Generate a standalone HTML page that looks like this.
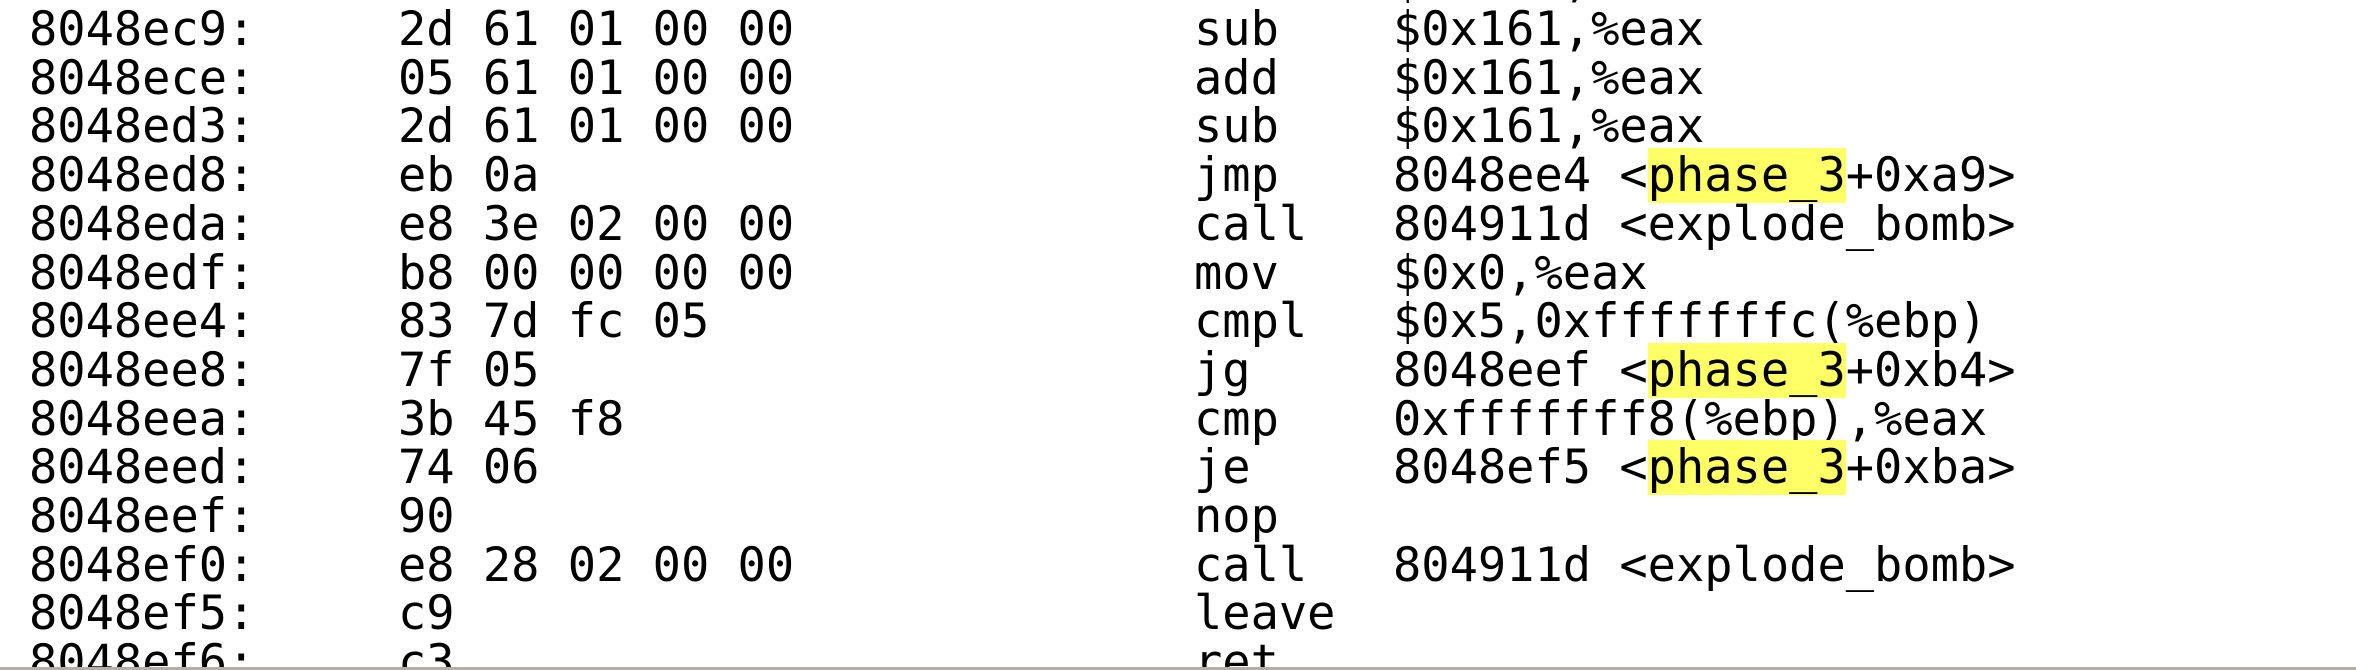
<!DOCTYPE html>
<html><head><meta charset="utf-8"><style>
html,body{margin:0;padding:0;background:#fff;width:2356px;height:670px;overflow:hidden}
.w{position:relative;width:2356px;height:670px}
.r{position:absolute;left:0;height:48.7px;line-height:48.7px;font-family:"DejaVu Sans Mono","Liberation Mono",monospace;font-size:47px;color:#000;white-space:pre}
.r span{position:absolute;top:0}
.a{left:29px}.h{left:398px}.m{left:1194px}.o{left:1393px}
.hl{background:#ffff66}
.b{position:absolute;left:0;top:667px;width:2356px;height:3px;background:#b3aea6}
</style></head><body><div class="w">
<div class="r" style="top:-43px"><span class="o">$0x161,%eax</span></div>
<div class="r" style="top:6px"><span class="a">8048ec9:</span><span class="h">2d 61 01 00 00</span><span class="m">sub</span><span class="o">$0x161,%eax</span></div>
<div class="r" style="top:54.7px"><span class="a">8048ece:</span><span class="h">05 61 01 00 00</span><span class="m">add</span><span class="o">$0x161,%eax</span></div>
<div class="r" style="top:103.4px"><span class="a">8048ed3:</span><span class="h">2d 61 01 00 00</span><span class="m">sub</span><span class="o">$0x161,%eax</span></div>
<div class="r" style="top:152.1px"><span class="a">8048ed8:</span><span class="h">eb 0a</span><span class="m">jmp</span><span class="o">8048ee4 &lt;<i class="hl" style="font-style:normal">phase_3</i>+0xa9&gt;</span></div>
<div class="r" style="top:200.8px"><span class="a">8048eda:</span><span class="h">e8 3e 02 00 00</span><span class="m">call</span><span class="o">804911d &lt;explode_bomb&gt;</span></div>
<div class="r" style="top:249.5px"><span class="a">8048edf:</span><span class="h">b8 00 00 00 00</span><span class="m">mov</span><span class="o">$0x0,%eax</span></div>
<div class="r" style="top:298.2px"><span class="a">8048ee4:</span><span class="h">83 7d fc 05</span><span class="m">cmpl</span><span class="o">$0x5,0xfffffffc(%ebp)</span></div>
<div class="r" style="top:346.9px"><span class="a">8048ee8:</span><span class="h">7f 05</span><span class="m">jg</span><span class="o">8048eef &lt;<i class="hl" style="font-style:normal">phase_3</i>+0xb4&gt;</span></div>
<div class="r" style="top:395.6px"><span class="a">8048eea:</span><span class="h">3b 45 f8</span><span class="m">cmp</span><span class="o">0xfffffff8(%ebp),%eax</span></div>
<div class="r" style="top:444.3px"><span class="a">8048eed:</span><span class="h">74 06</span><span class="m">je</span><span class="o">8048ef5 &lt;<i class="hl" style="font-style:normal">phase_3</i>+0xba&gt;</span></div>
<div class="r" style="top:493px"><span class="a">8048eef:</span><span class="h">90</span><span class="m">nop</span></div>
<div class="r" style="top:541.7px"><span class="a">8048ef0:</span><span class="h">e8 28 02 00 00</span><span class="m">call</span><span class="o">804911d &lt;explode_bomb&gt;</span></div>
<div class="r" style="top:590.4px"><span class="a">8048ef5:</span><span class="h">c9</span><span class="m">leave</span></div>
<div class="r" style="top:639.1px"><span class="a">8048ef6:</span><span class="h">c3</span><span class="m">ret</span></div>
<div class="b"></div>
</div></body></html>
